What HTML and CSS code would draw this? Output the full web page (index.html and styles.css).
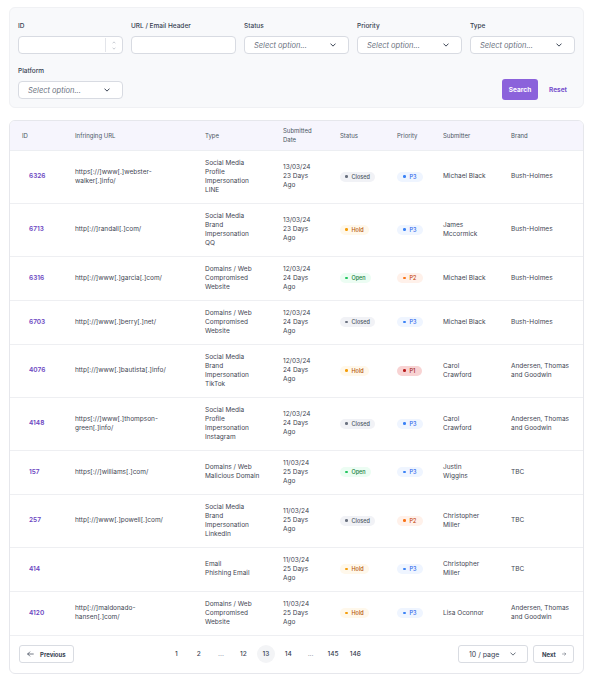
FILE: index.html
```html
<!DOCTYPE html>
<html>
<head>
<meta charset="utf-8">
<link rel="stylesheet" href="styles.css">
</head>
<body>
<div class="page">
  <section class="filters">
    <div class="filter-grid">
      <div class="field">
        <label class="lbl">ID</label>
        <div class="input num">
          <span class="spin">
            <svg viewBox="0 0 6 4" class="sp"><polyline points="1,3.2 3,1 5,3.2"/></svg>
            <svg viewBox="0 0 6 4" class="sp"><polyline points="1,0.8 3,3 5,0.8"/></svg>
          </span>
        </div>
      </div>
      <div class="field">
        <label class="lbl">URL / Email Header</label>
        <div class="input"></div>
      </div>
      <div class="field">
        <label class="lbl">Status</label>
        <div class="input select"><span class="ph">Select option...</span><svg class="chev" viewBox="0 0 8 5"><polyline points="1,1 4,4 7,1"/></svg></div>
      </div>
      <div class="field">
        <label class="lbl">Priority</label>
        <div class="input select"><span class="ph">Select option...</span><svg class="chev" viewBox="0 0 8 5"><polyline points="1,1 4,4 7,1"/></svg></div>
      </div>
      <div class="field">
        <label class="lbl">Type</label>
        <div class="input select"><span class="ph">Select option...</span><svg class="chev" viewBox="0 0 8 5"><polyline points="1,1 4,4 7,1"/></svg></div>
      </div>
    </div>
    <div class="filter-row2">
      <div class="field">
        <label class="lbl">Platform</label>
        <div class="input select"><span class="ph">Select option...</span><svg class="chev" viewBox="0 0 8 5"><polyline points="1,1 4,4 7,1"/></svg></div>
      </div>
      <div class="actions">
        <button class="btn-search">Search</button>
        <button class="btn-reset">Reset</button>
      </div>
    </div>
  </section>

  <section class="table-card">
    <table class="grid">
      <colgroup>
        <col class="c-id"><col class="c-url"><col class="c-type"><col class="c-date"><col class="c-status"><col class="c-pri"><col class="c-sub"><col class="c-brand">
      </colgroup>
      <thead>
        <tr>
          <th class="t-id">ID</th><th class="t-url">Infringing URL</th><th class="t-type">Type</th><th class="t-date">Submitted Date</th><th>Status</th><th>Priority</th><th class="t-sub">Submitter</th><th>Brand</th>
        </tr>
      </thead>
      <tbody>
        <tr>
          <td class="t-id"><a class="idl">6326</a></td>
          <td class="t-url">https[://]www[.]webster-walker[.]info/</td>
          <td class="t-type">Social Media Profile Impersonation<br>LINE</td>
          <td class="t-date">13/03/24<br>23 Days Ago</td>
          <td><span class="badge closed"><i></i>Closed</span></td>
          <td><span class="badge p3"><i></i>P3</span></td>
          <td class="t-sub">Michael Black</td>
          <td class="t-brand">Bush-Holmes</td>
        </tr>
        <tr>
          <td class="t-id"><a class="idl">6713</a></td>
          <td class="t-url">http[://]randall[.]com/</td>
          <td class="t-type">Social Media Brand Impersonation<br>QQ</td>
          <td class="t-date">13/03/24<br>23 Days Ago</td>
          <td><span class="badge hold"><i></i>Hold</span></td>
          <td><span class="badge p3"><i></i>P3</span></td>
          <td class="t-sub">James Mccormick</td>
          <td class="t-brand">Bush-Holmes</td>
        </tr>
        <tr>
          <td class="t-id"><a class="idl">6316</a></td>
          <td class="t-url">http[://]www[.]garcia[.]com/</td>
          <td class="t-type">Domains / Web<br>Compromised Website</td>
          <td class="t-date">12/03/24<br>24 Days Ago</td>
          <td><span class="badge open"><i></i>Open</span></td>
          <td><span class="badge p2"><i></i>P2</span></td>
          <td class="t-sub">Michael Black</td>
          <td class="t-brand">Bush-Holmes</td>
        </tr>
        <tr>
          <td class="t-id"><a class="idl">6703</a></td>
          <td class="t-url">http[://]www[.]berry[.]net/</td>
          <td class="t-type">Domains / Web<br>Compromised Website</td>
          <td class="t-date">12/03/24<br>24 Days Ago</td>
          <td><span class="badge closed"><i></i>Closed</span></td>
          <td><span class="badge p3"><i></i>P3</span></td>
          <td class="t-sub">Michael Black</td>
          <td class="t-brand">Bush-Holmes</td>
        </tr>
        <tr>
          <td class="t-id"><a class="idl">4076</a></td>
          <td class="t-url">http[://]www[.]bautista[.]info/</td>
          <td class="t-type">Social Media Brand Impersonation<br>TikTok</td>
          <td class="t-date">12/03/24<br>24 Days Ago</td>
          <td><span class="badge hold"><i></i>Hold</span></td>
          <td><span class="badge p1"><i></i>P1</span></td>
          <td class="t-sub">Carol Crawford</td>
          <td class="t-brand">Andersen, Thomas and Goodwin</td>
        </tr>
        <tr>
          <td class="t-id"><a class="idl">4148</a></td>
          <td class="t-url">https[://]www[.]thompson-green[.]info/</td>
          <td class="t-type">Social Media Profile Impersonation<br>Instagram</td>
          <td class="t-date">12/03/24<br>24 Days Ago</td>
          <td><span class="badge closed"><i></i>Closed</span></td>
          <td><span class="badge p3"><i></i>P3</span></td>
          <td class="t-sub">Carol Crawford</td>
          <td class="t-brand">Andersen, Thomas and Goodwin</td>
        </tr>
        <tr>
          <td class="t-id"><a class="idl">157</a></td>
          <td class="t-url">https[://]williams[.]com/</td>
          <td class="t-type">Domains / Web<br>Malicious Domain</td>
          <td class="t-date">11/03/24<br>25 Days Ago</td>
          <td><span class="badge open"><i></i>Open</span></td>
          <td><span class="badge p3"><i></i>P3</span></td>
          <td class="t-sub">Justin<br>Wiggins</td>
          <td class="t-brand">TBC</td>
        </tr>
        <tr>
          <td class="t-id"><a class="idl">257</a></td>
          <td class="t-url">http[://]www[.]powell[.]com/</td>
          <td class="t-type">Social Media Brand Impersonation<br>LinkedIn</td>
          <td class="t-date">11/03/24<br>25 Days Ago</td>
          <td><span class="badge closed"><i></i>Closed</span></td>
          <td><span class="badge p2"><i></i>P2</span></td>
          <td class="t-sub">Christopher Miller</td>
          <td class="t-brand">TBC</td>
        </tr>
        <tr>
          <td class="t-id"><a class="idl">414</a></td>
          <td class="t-url"></td>
          <td class="t-type">Email<br>Phishing Email</td>
          <td class="t-date">11/03/24<br>25 Days Ago</td>
          <td><span class="badge hold"><i></i>Hold</span></td>
          <td><span class="badge p3"><i></i>P3</span></td>
          <td class="t-sub">Christopher Miller</td>
          <td class="t-brand">TBC</td>
        </tr>
        <tr>
          <td class="t-id"><a class="idl">4120</a></td>
          <td class="t-url">http[://]maldonado-hansen[.]com/</td>
          <td class="t-type">Domains / Web<br>Compromised Website</td>
          <td class="t-date">11/03/24<br>25 Days Ago</td>
          <td><span class="badge hold"><i></i>Hold</span></td>
          <td><span class="badge p3"><i></i>P3</span></td>
          <td class="t-sub">Lisa Oconnor</td>
          <td class="t-brand">Andersen, Thomas and Goodwin</td>
        </tr>
      </tbody>
    </table>
    <div class="pager">
      <button class="pbtn"><svg class="arr" viewBox="0 0 10 8"><path d="M9 4H1M4 1L1 4l3 3"/></svg>Previous</button>
      <div class="pages">
        <span class="pg">1</span><span class="pg">2</span><span class="pg dots">...</span><span class="pg">12</span><span class="pg cur">13</span><span class="pg">14</span><span class="pg dots">...</span><span class="pg">145</span><span class="pg">146</span>
      </div>
      <div class="pright">
        <div class="psel"><span>10 / page</span><svg class="chev" viewBox="0 0 8 5"><polyline points="1,1 4,4 7,1"/></svg></div>
        <button class="pbtn next">Next<svg class="arr" viewBox="0 0 10 8"><path d="M1 4h8M6 1l3 3-3 3"/></svg></button>
      </div>
    </div>
  </section>
</div>
</body>
</html>
```

FILE: styles.css
```css
* { box-sizing: border-box; }
html, body { margin: 0; padding: 0; background: #ffffff; }
body { font-family: Inter, "Noto Sans", sans-serif; color: #374151; }
.page { width: 575px; margin: 7px 0 0 9px; }

.filters {
  background: #f8f9fb;
  border: 1px solid #f0f1f4;
  border-radius: 6px;
  padding: 13px 8px 8px 8px;
}
.filter-grid {
  display: grid;
  grid-template-columns: repeat(5, 105px);
  column-gap: 8px;
}
.field { display: flex; flex-direction: column; }
.lbl {
  font-size: 6.5px;
  line-height: 11px;
  font-weight: 500;
  color: #374151;
  margin-bottom: 4px;
}
.input {
  height: 18px;
  background: #fff;
  border: 1px solid #d8dbe2;
  border-radius: 4px;
  display: flex;
  align-items: center;
  position: relative;
}
.input.num { justify-content: flex-end; }
.spin {
  width: 17px;
  height: 14px;
  border-left: 1px solid #e3e5ea;
  display: flex;
  flex-direction: column;
  align-items: center;
  justify-content: center;
  gap: 3px;
}
.sp { width: 4px; height: 3px; fill: none; stroke: #9ca3af; stroke-width: 0.8; }
.select { padding: 0 12px 0 9px; justify-content: space-between; }
.ph {
  font-size: 7.5px;
  font-style: italic;
  color: #6b7280;
}
.chev { width: 6px; height: 4px; fill: none; stroke: #374151; stroke-width: 1.3; stroke-linecap: round; stroke-linejoin: round; }

.filter-row2 {
  display: flex;
  justify-content: space-between;
  align-items: flex-end;
  margin-top: 12px;
}
.filter-row2 .field { width: 105px; }
.actions { display: flex; align-items: center; gap: 3px; margin-bottom: -1px; }
.btn-search {
  font-family: inherit;
  height: 21px;
  width: 36px;
  border: none;
  border-radius: 3px;
  background: #8b62db;
  color: #fff;
  font-size: 6.5px;
  font-weight: 700;
  padding: 0;
}
.btn-reset {
  font-family: inherit;
  background: none;
  border: none;
  color: #7650cc;
  font-size: 6.5px;
  font-weight: 700;
  padding: 0 8px;
  height: 21px;
}

.table-card {
  margin-top: 12px;
  border: 1px solid #e6e7ec;
  border-radius: 6px;
  overflow: hidden;
  background: #fff;
}
.grid {
  width: 100%;
  border-collapse: collapse;
  table-layout: fixed;
  font-size: 6.5px;
  line-height: 9px;
}
.c-id { width: 65px; }
.c-url { width: 130px; }
.c-type { width: 78px; }
.c-date { width: 57px; }
.c-status { width: 57px; }
.c-pri { width: 46px; }
.c-sub { width: 68px; }
.c-brand { width: 72px; }

thead tr { background: #f6f5fd; }
th {
  text-align: left;
  font-weight: 400;
  color: #4b5563;
  font-size: 6px;
  line-height: 9px;
  height: 29px;
  padding: 0;
  vertical-align: middle;
  border-bottom: 1px solid #eceef2;
}
th.t-id { padding-left: 12px; }
th.t-date { padding-right: 28px; }
td {
  padding: 8px 0 8px 0;
  vertical-align: middle;
  color: #3f4653;
  border-bottom: 1px solid #eeeff2;
}
td.t-id { padding-left: 19px; }
.idl { color: #6b46c1; font-weight: 600; }
td.t-url { padding-right: 26px; }
td.t-type { padding-right: 21px; }
td.t-date { padding-right: 24px; }
td.t-sub { padding-right: 22px; }
td.t-brand { padding-right: 8px; }

.badge {
  display: inline-flex;
  align-items: center;
  height: 10px;
  padding: 0 5px 0 5px;
  border-radius: 5px;
  font-size: 5.5px;
  font-weight: 500;
  line-height: 10px;
}
.badge i {
  width: 2.5px;
  height: 2.5px;
  border-radius: 50%;
  margin-right: 4px;
  display: inline-block;
}
.closed { background: #f1f2f6; color: #4b5563; }
.closed i { background: #6b7280; }
.hold { background: #fff8eb; color: #b45309; }
.hold i { background: #f59e0b; }
.open { background: #ecfdf3; color: #15803d; }
.open i { background: #22c55e; }
.p3 { background: #eff5ff; color: #2563eb; padding: 0 7px 0 6px; }
.p3 i { background: #3b82f6; }
.p2 { background: #fff1ea; color: #c2410c; padding: 0 7px 0 6px; }
.p2 i { background: #f97316; }
.p1 { background: #f8d3d3; color: #991b1b; padding: 0 7px 0 6px; }
.p1 i { background: #b91c1c; }

.pager {
  height: 37px;
  display: flex;
  align-items: center;
  justify-content: space-between;
  padding: 0 9px;
}
.pbtn {
  font-family: inherit;
  height: 18px;
  background: #fff;
  border: 1px solid #d9dce2;
  border-radius: 3px;
  font-size: 6px;
  font-weight: 700;
  color: #374151;
  display: inline-flex;
  align-items: center;
  gap: 6px;
  padding: 0 7px;
}
.arr { width: 7px; height: 6px; fill: none; stroke: #374151; stroke-width: 1; stroke-linecap: round; stroke-linejoin: round; }
.pages { display: flex; align-items: center; gap: 4.4px; }
.pg {
  min-width: 18px;
  height: 18px;
  border-radius: 9px;
  display: inline-flex;
  align-items: center;
  justify-content: center;
  font-size: 6.5px;
  font-weight: 500;
  color: #374151;
}
.pg.dots { color: #9ca3af; }
.pg.cur { background: #f3f4f6; }
.pright { display: flex; align-items: center; gap: 5px; }
.psel {
  width: 70px;
  height: 18px;
  border: 1px solid #d9dce2;
  border-radius: 3px;
  display: flex;
  align-items: center;
  justify-content: space-between;
  padding: 0 11px 0 10px;
  font-size: 7px;
  color: #374151;
}
.psel .chev { stroke-width: 1; }
.next { padding: 0 7px 0 8px; width: 41px; }
```
